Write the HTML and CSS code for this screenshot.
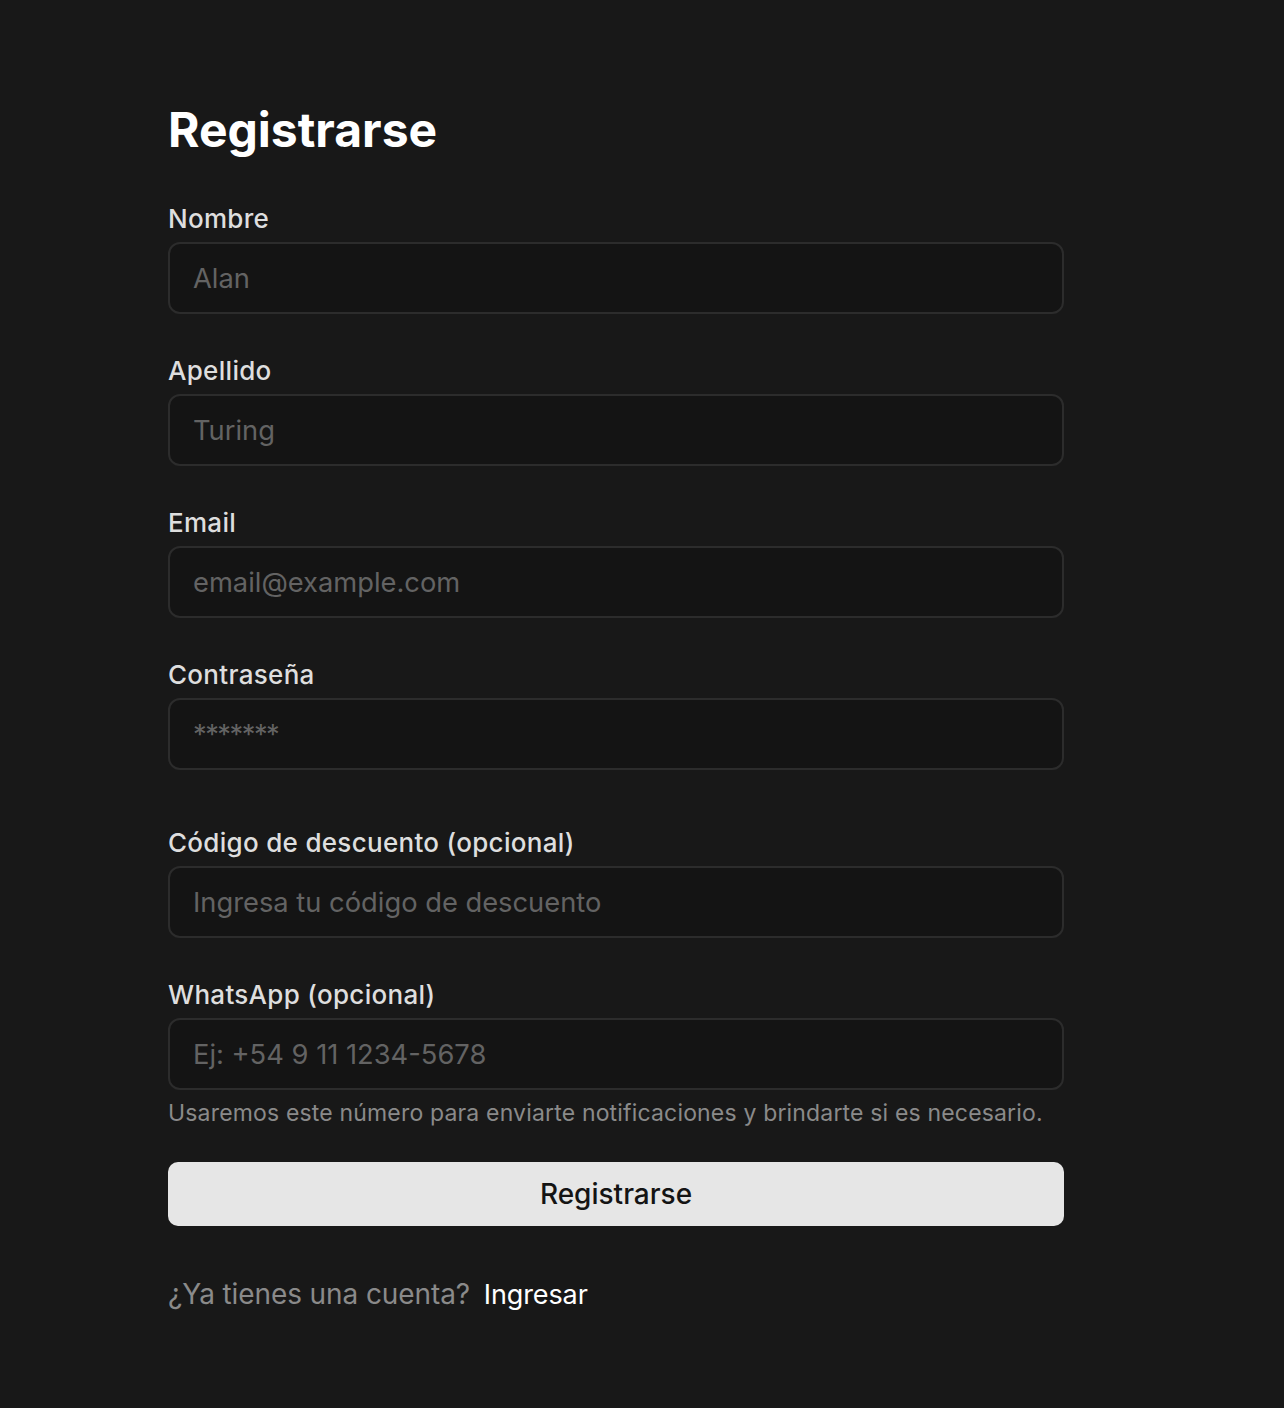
FILE: index.html
```html
<!DOCTYPE html>
<html lang="es">
<head>
<meta charset="utf-8">
<title>Registrarse</title>
<link rel="stylesheet" href="styles.css">
</head>
<body>
<main class="page">
  <form class="form">
    <h1 class="title">Registrarse</h1>
    <div class="field">
      <label class="label" for="nombre">Nombre</label>
      <input class="input" id="nombre" type="text" placeholder="Alan">
    </div>
    <div class="field">
      <label class="label" for="apellido">Apellido</label>
      <input class="input" id="apellido" type="text" placeholder="Turing">
    </div>
    <div class="field">
      <label class="label" for="email">Email</label>
      <input class="input" id="email" type="email" placeholder="email@example.com">
    </div>
    <div class="field field-gap">
      <label class="label" for="pass">Contraseña</label>
      <input class="input input-pass" id="pass" type="password" placeholder="*******">
    </div>
    <div class="field">
      <label class="label" for="codigo">Código de descuento (opcional)</label>
      <input class="input" id="codigo" type="text" placeholder="Ingresa tu código de descuento">
    </div>
    <div class="field field-last">
      <label class="label" for="wa">WhatsApp (opcional)</label>
      <input class="input" id="wa" type="tel" placeholder="Ej: +54 9 11 1234-5678">
      <p class="help">Usaremos este número para enviarte notificaciones y brindarte si es necesario.</p>
    </div>
    <button class="button" type="button">Registrarse</button>
    <p class="footer">¿Ya tienes una cuenta? <a class="link" href="#">Ingresar</a></p>
  </form>
</main>
</body>
</html>
```

FILE: styles.css
```css
* { box-sizing: border-box; }
html, body {
  margin: 0;
  background: #181818;
  font-family: Inter, "Noto Sans", sans-serif;
  color: #e4e4e4;
}
.page {
  padding: 106px 0 80px 168px;
}
.form {
  width: 896px;
  display: flex;
  flex-direction: column;
}
.title {
  margin: 0 0 49px;
  font-size: 48px;
  line-height: 48px;
  font-weight: 700;
  color: #ffffff;
}
.field {
  display: flex;
  flex-direction: column;
  gap: 7px;
  margin-bottom: 41px;
}
.field-gap { margin-bottom: 57px; }
.field-last { margin-bottom: 33px; }
.label {
  font-size: 26px;
  line-height: 32px;
  font-weight: 500;
  color: #dedede;
  letter-spacing: 0.3px;
}
.input {
  height: 72px;
  width: 100%;
  padding: 0 23px;
  border: 2px solid #2c2c2c;
  border-radius: 12px;
  background: #141414;
  color: #e4e4e4;
  font-family: inherit;
  font-size: 27.3px;
  outline: none;
}
.input::placeholder { color: #636363; }
.input-pass::placeholder { letter-spacing: -1.5px; }
.help {
  margin: 0;
  font-size: 23px;
  line-height: 32px;
  color: #8a8a8a;
  letter-spacing: 0.17px;
}
.button {
  height: 64px;
  width: 100%;
  border: none;
  border-radius: 10px;
  background: #e6e6e6;
  color: #141414;
  font-family: inherit;
  font-size: 28px;
  font-weight: 500;
  cursor: pointer;
}
.footer {
  margin: 50px 0 0;
  font-size: 28px;
  line-height: 36px;
  color: #8a8a8a;
  letter-spacing: -0.1px;
}
.link {
  color: #ffffff;
  text-decoration: none;
  margin-left: 6px;
  font-size: 27px;
}
```
